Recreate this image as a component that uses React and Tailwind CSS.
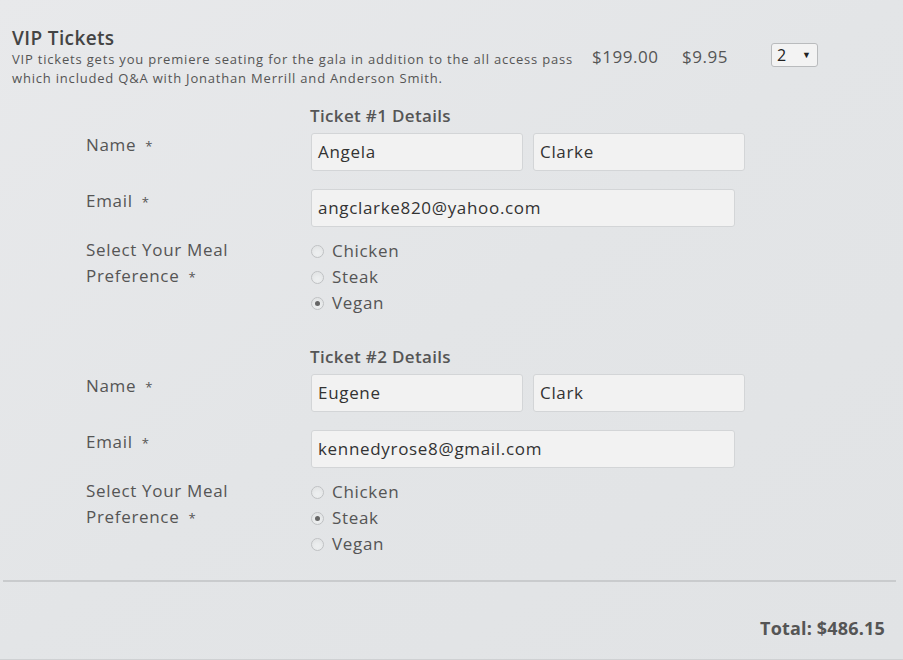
import React from 'react';

const font = { fontFamily: '"Open Sans", "Liberation Sans", sans-serif' };

const TextBox = ({ value, className }) => (
  <div
    className={`h-[38px] flex items-center px-[6px] bg-[#f2f2f2] border border-[#d3d5d7] rounded-[3px] text-[17px] tracking-[0.04em] text-[#333] ${className}`}
  >
    {value}
  </div>
);

const Radio = ({ label, checked }) => (
  <div className="flex items-center h-[26px]">
    <span className="w-[13px] h-[13px] rounded-full border border-[#bfc1c3] bg-[#eceeef] flex items-center justify-center mr-[8px] shadow-inner">
      {checked && <span className="w-[5px] h-[5px] rounded-full bg-[#666]" />}
    </span>
    <span className="text-[17px] tracking-[0.04em] text-[#555]">{label}</span>
  </div>
);

const Label = ({ children }) => (
  <div className="w-[225px] text-[17px] tracking-[0.04em] text-[#555] leading-[26px] -mt-[1px]">
    {children}
  </div>
);

const TicketForm = ({ num, first, last, email, meal }) => (
  <div className="pl-[86px]">
    <div className="pl-[224px] text-[17px] tracking-[0.02em] font-semibold text-[#555] leading-[22px]">
      Ticket #{num} Details
    </div>
    <div className="flex mt-[6px]">
      <Label>
        Name <span className="ml-1 text-[13px]">*</span>
      </Label>
      <div className="flex gap-[10px]">
        <TextBox value={first} className="w-[212px]" />
        <TextBox value={last} className="w-[212px]" />
      </div>
    </div>
    <div className="flex mt-[18px]">
      <Label>
        Email <span className="ml-1 text-[13px]">*</span>
      </Label>
      <TextBox value={email} className="w-[424px]" />
    </div>
    <div className="flex mt-[11px]">
      <Label>
        Select Your Meal
        <br />
        Preference <span className="ml-1 text-[13px]">*</span>
      </Label>
      <div className="flex flex-col">
        {['Chicken', 'Steak', 'Vegan'].map((m) => (
          <Radio key={m} label={m} checked={m === meal} />
        ))}
      </div>
    </div>
  </div>
);

export default function App() {
  return (
    <div
      style={font}
      className="w-[903px] h-[660px] overflow-hidden bg-gradient-to-br from-[#e8e9eb] via-[#e3e5e7] to-[#e1e3e5] border-b border-[#cfd1d3]"
    >
      <div className="pt-[26px] px-[12px]">
        <div className="text-[19px] tracking-[0.02em] font-semibold text-[#444] leading-[24px]">VIP Tickets</div>
        <div className="flex items-start">
          <div className="w-[575px] text-[13px] tracking-[0.062em] text-[#555] leading-[19px]">
            VIP tickets gets you premiere seating for the gala in addition to the all access pass
            which included Q&amp;A with Jonathan Merrill and Anderson Smith.
          </div>
          <div className="ml-[5px] w-[90px] text-[17px] tracking-[0.03em] text-[#555] -mt-[6px]">$199.00</div>
          <div className="w-[89px] text-[17px] tracking-[0.03em] text-[#555] -mt-[6px]">$9.95</div>
          <div className="-mt-[7px] w-[47px] h-[24px] border border-[#b9bbbd] rounded-[3px] bg-[#f3f3f3] flex items-center justify-between pl-[5px] pr-[6px]">
            <span className="text-[16px] text-[#222]">2</span>
            <span className="text-[9px] text-[#222]">▼</span>
          </div>
        </div>
      </div>

      <div className="mt-[17px]">
        <TicketForm num={1} first="Angela" last="Clarke" email="angclarke820@yahoo.com" meal="Vegan" />
      </div>
      <div className="mt-[30px]">
        <TicketForm num={2} first="Eugene" last="Clark" email="kennedyrose8@gmail.com" meal="Steak" />
      </div>

      <div className="mt-[23px] mx-[3px] w-[893px] border-t-2 border-[#c9cbcd]" />

      <div className="mt-[33px] pr-[18px] text-right text-[18px] tracking-[0.01em] font-bold text-[#555]">
        Total: $486.15
      </div>
    </div>
  );
}
